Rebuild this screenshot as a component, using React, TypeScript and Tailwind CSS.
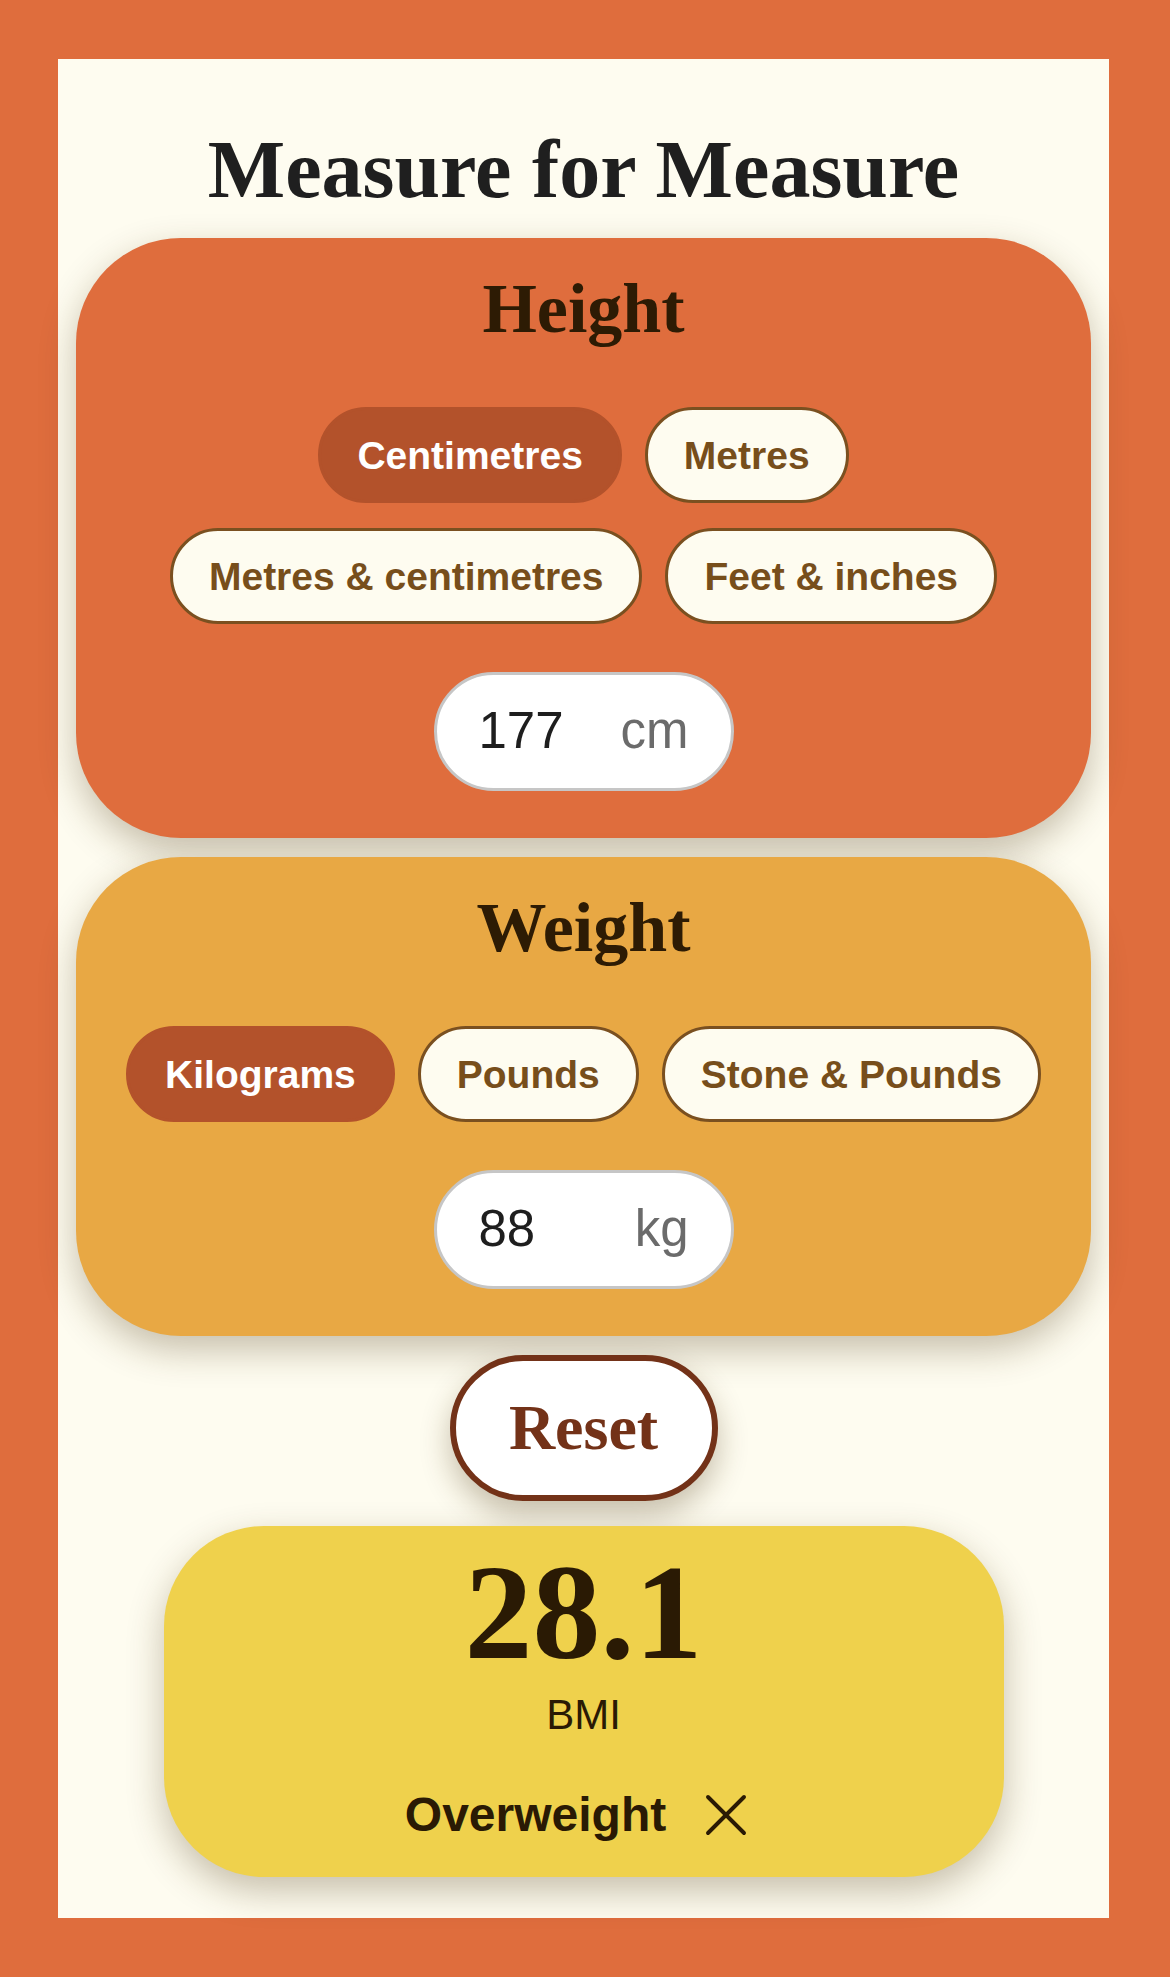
import { X } from "lucide-react";

const serif = "font-['Liberation_Serif',_'Times_New_Roman',serif]";
const sans = "font-['Liberation_Sans',Arial,sans-serif]";

type Unit = { label: string; active?: boolean };

function UnitButton({ label, active }: Unit) {
	return (
		<button
			className={
				active
					? `h-[96px] rounded-full border-[3px] border-[#B3522B] bg-[#B3522B] px-[36px] text-[39px] font-bold leading-none text-white ${sans}`
					: `h-[96px] rounded-full border-[3px] border-[#7A5020] bg-[#FEFCF0] px-[36px] text-[39px] font-bold leading-none text-[#774E1B] ${sans}`
			}
		>
			{label}
		</button>
	);
}

function ValueField({ value, unit }: { value: string; unit: string }) {
	return (
		<div
			className={`mx-auto flex h-[119px] w-[300px] items-center justify-between rounded-full border-[3px] border-[#C6C6C6] bg-white px-[42px] text-[51px] ${sans}`}
		>
			<span className="text-[#1E1E1E]">{value}</span>
			<span className="text-[#6B6B6B]">{unit}</span>
		</div>
	);
}

function MeasureCard({
	title,
	color,
	units,
	value,
	unit,
}: {
	title: string;
	color: string;
	units: Unit[];
	value: string;
	unit: string;
}) {
	return (
		<section
			className={`mx-[18px] rounded-[105px] px-[48px] pt-[36px] pb-[47px] shadow-[0_14px_36px_rgba(70,50,10,0.3)] ${color}`}
		>
			<h2
				className={`text-center text-[70px] font-bold leading-none text-[#2D1B04] ${serif}`}
			>
				{title}
			</h2>
			<div className="mt-[63px] flex flex-wrap justify-center gap-x-[23px] gap-y-[25px]">
				{units.map((u, i) => (
					<UnitButton key={i} label={u.label} active={u.active} />
				))}
			</div>
			<div className="mt-[48px]">
				<ValueField value={value} unit={unit} />
			</div>
		</section>
	);
}

export default function App() {
	return (
		<div className="min-h-[1977px] bg-[#DF6D3D] pl-[58px] pr-[61px] pt-[59px] pb-[60px]">
			<main className="flex flex-col bg-[#FEFCF0] pt-[70px] pb-[41px]">
				<h1
					className={`text-center text-[82px] font-bold leading-none text-[#1F1F1F] ${serif}`}
				>
					Measure for Measure
				</h1>

				<div className="mt-[27px]">
					<MeasureCard
						title="Height"
						color="bg-[#DF6D3D]"
						units={[
							{ label: "Centimetres", active: true },
							{ label: "Metres" },
							{ label: "Metres & centimetres" },
							{ label: "Feet & inches" },
						]}
						value="177"
						unit="cm"
					/>
				</div>

				<div className="mt-[19px]">
					<MeasureCard
						title="Weight"
						color="bg-[#E8A844]"
						units={[
							{ label: "Kilograms", active: true },
							{ label: "Pounds" },
							{ label: "Stone & Pounds" },
						]}
						value="88"
						unit="kg"
					/>
				</div>

				<button
					className={`mx-auto mt-[19px] h-[146px] w-[268px] rounded-full border-[6px] border-[#733218] bg-white text-[64px] font-bold leading-none text-[#733218] shadow-[0_14px_30px_rgba(70,50,10,0.3)] ${serif}`}
				>
					Reset
				</button>

				<section className="mx-auto mt-[25px] flex w-[840px] flex-col items-center rounded-[100px] bg-[#EFD14C] pt-[18px] pb-[38px] shadow-[0_14px_36px_rgba(70,50,10,0.3)]">
					<div
						className={`text-[136px] font-bold leading-none text-[#2A1A04] ${serif}`}
					>
						28.1
					</div>
					<div
						className={`mt-[14px] text-[42px] leading-none text-[#2A1A04] ${sans}`}
					>
						BMI
					</div>
					<div className="mt-[55px] flex h-[48px] items-center gap-[24px]">
						<span
							className={`text-[48px] font-bold leading-none text-[#2A1A04] ${sans}`}
						>
							Overweight
						</span>
						<X
							size={72}
							strokeWidth={1.3}
							color="#2A1A04"
							className="-my-[12px]"
						/>
					</div>
				</section>
			</main>
		</div>
	);
}
